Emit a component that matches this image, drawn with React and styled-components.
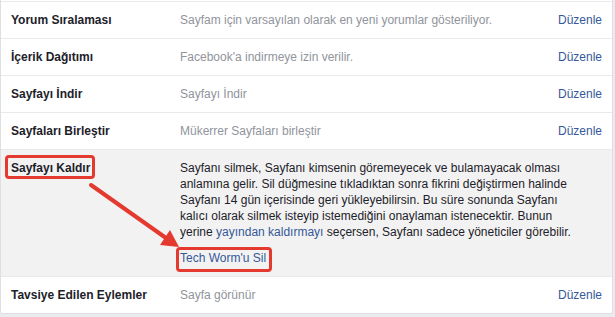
import React from 'react';
import styled, { createGlobalStyle } from 'styled-components';

const GlobalStyle = createGlobalStyle`
body {
  margin: 0;
  background: #e9ebee;
  font-family: "Liberation Sans", Arial, sans-serif;
  font-size: 12px;
  color: #1d2129;
}
`;

const Card = styled.div`
width: 611px;
padding-top: 1px;
background: #fff;
border-left: 1px solid #dddfe2;
border-right: 1px solid #dddfe2;
border-bottom: 1px solid #dddfe2;
border-radius: 0 0 3px 3px;
overflow: hidden;
`;

const Row = styled.div`
position: relative;
display: grid;
grid-template-columns: 169px 1fr auto;
padding: 10px 10px;
line-height: 16px;
border-top: 1px solid #e9eaed;
background: ${(p) => (p.open ? '#f2f2f2' : '#fff')};
`;

const Label = styled.div`
font-weight: bold;
color: #1d2129;
`;

const Desc = styled.div`
color: #90949c;
white-space: nowrap;
`;

const Edit = styled.a`
color: #365899;
cursor: pointer;
`;

const Body = styled.div`
grid-column: 2 / 4;
color: #1d2129;
white-space: nowrap;
`;

const Link = styled.a`
color: #365899;
cursor: pointer;
`;

const DeleteLine = styled.div`
margin-top: 10px;
`;

const Marked = styled.span`
position: relative;
display: inline-block;
&::after {
  content: '';
  position: absolute;
  left: ${(p) => p.l}px;
  right: ${(p) => p.r}px;
  top: ${(p) => p.t}px;
  bottom: ${(p) => p.b}px;
  border: 3px solid #e3392f;
  border-radius: 4px;
  pointer-events: none;
}
`;

const Arrow = styled.svg`
position: absolute;
left: 0;
top: 0;
pointer-events: none;
`;

const rows = [
  { label: 'Yorum Sıralaması', desc: 'Sayfam için varsayılan olarak en yeni yorumlar gösteriliyor.' },
  { label: 'İçerik Dağıtımı', desc: "Facebook'a indirmeye izin verilir." },
  { label: 'Sayfayı İndir', desc: 'Sayfayı İndir' },
  { label: 'Sayfaları Birleştir', desc: 'Mükerrer Sayfaları birleştir' },
];

function App() {
  return (
    <>
      <GlobalStyle />
      <Card>
        {rows.map((r) => (
          <Row key={r.label}>
            <Label>{r.label}</Label>
            <Desc>{r.desc}</Desc>
            <Edit>Düzenle</Edit>
          </Row>
        ))}
        <Row open>
          <Label>
            <Marked l={-6} r={-5} t={-5} b={-3}>Sayfayı Kaldır</Marked>
          </Label>
          <Body>
            Sayfanı silmek, Sayfanı kimsenin göremeyecek ve bulamayacak olması
            <br />
            anlamına gelir. Sil düğmesine tıkladıktan sonra fikrini değiştirmen halinde
            <br />
            Sayfanı 14 gün içerisinde geri yükleyebilirsin. Bu süre sonunda Sayfanı
            <br />
            kalıcı olarak silmek isteyip istemediğini onaylaman istenecektir. Bunun
            <br />
            yerine <Link>yayından kaldırmayı</Link> seçersen, Sayfanı sadece yöneticiler görebilir.
            <DeleteLine>
              <Marked l={-4} r={-6} t={-3} b={-6}>
                <Link>Tech Worm'u Sil</Link>
              </Marked>
            </DeleteLine>
          </Body>
          <Arrow width="200" height="126" viewBox="0 0 200 126">
            <line x1="90" y1="35" x2="165" y2="88" stroke="#e3392f" strokeWidth="4" strokeLinecap="round" />
            <polygon points="178,97 159,95 169,80" fill="#e3392f" />
          </Arrow>
        </Row>
        <Row>
          <Label>Tavsiye Edilen Eylemler</Label>
          <Desc>Sayfa görünür</Desc>
          <Edit>Düzenle</Edit>
        </Row>
      </Card>
    </>
  );
}

export default App;
